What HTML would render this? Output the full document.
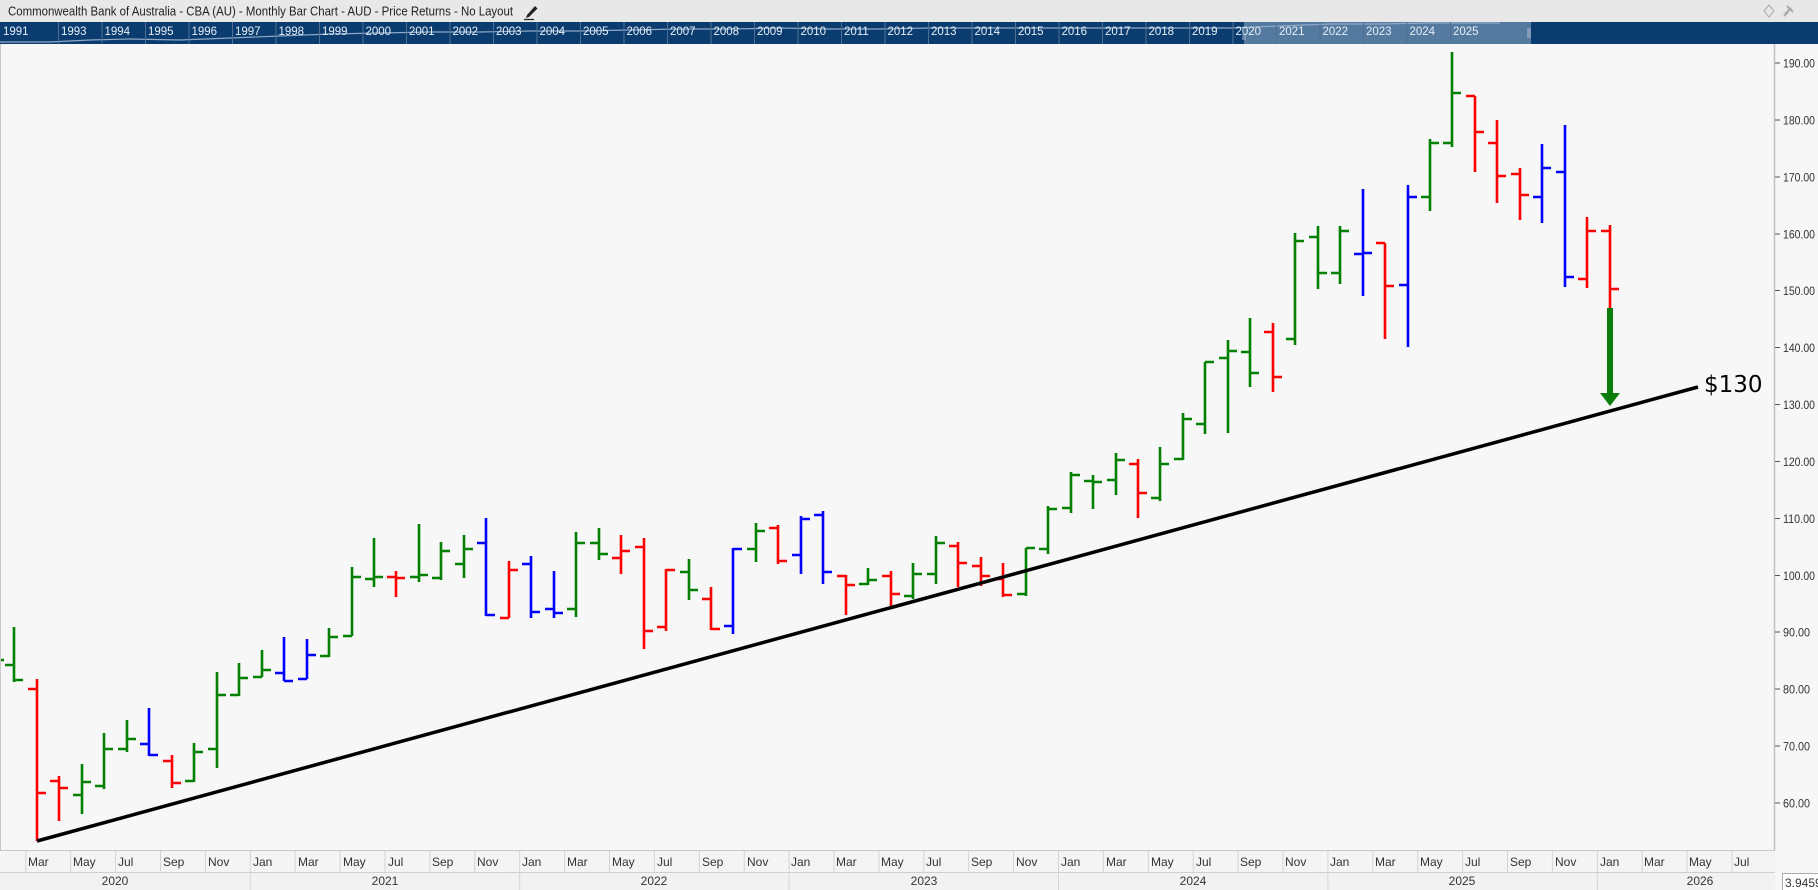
<!DOCTYPE html>
<html><head><meta charset="utf-8"><style>
html,body{margin:0;padding:0;width:1818px;height:890px;overflow:hidden;background:#f7f7f7;font-family:"Liberation Sans",sans-serif}
svg{display:block}
</style></head><body>
<svg width="1818" height="890" viewBox="0 0 1818 890" xmlns="http://www.w3.org/2000/svg" font-family="Liberation Sans, sans-serif">
<rect x="0" y="0" width="1818" height="890" fill="#f7f7f7"/>
<!-- title bar -->
<rect x="0" y="0" width="1818" height="22" fill="#e8e8e8"/>
<text x="8" y="15.5" font-size="12.5" fill="#222" textLength="505" lengthAdjust="spacingAndGlyphs">Commonwealth Bank of Australia - CBA (AU) - Monthly Bar Chart - AUD - Price Returns - No Layout</text>
<path d="M527 15 L535 6 L537.5 8.5 L529 17 L526 18 Z" fill="#222"/>
<line x1="524" y1="19.5" x2="534" y2="19.5" stroke="#222" stroke-width="1.2"/>
<path d="M1769 5 L1774 11 L1769 17 L1764 11 Z" fill="none" stroke="#aaa" stroke-width="1"/>
<path d="M1787 6 L1793 12 M1785 14 L1791 8 M1784 16 L1788 12" stroke="#aaa" stroke-width="2"/>
<!-- navigator -->
<rect x="0" y="22" width="1818" height="22" fill="#0b3c6f"/>
<rect x="1244" y="22" width="287" height="22" fill="#557aa0"/>
<polyline points="0,42 50,42 90,40 130,39 180,40 230,38 280,36 330,34 380,33 430,32 480,32 530,31 580,31 630,30 680,29 730,29 780,28 830,29 880,29 930,28 980,28 1030,28 1080,28 1130,28 1180,28 1230,28 1280,26 1330,24 1380,24 1430,23 1480,23 1500,23" fill="none" stroke="#8fa9c6" stroke-width="1.2"/>
<g fill="#e6eef6" font-size="11.5">
<text x="3" y="35">1991</text>
<g stroke="#4f6f92" stroke-width="1">
<line x1="58.5" y1="22" x2="58.5" y2="44"/><line x1="102" y1="22" x2="102" y2="44"/><line x1="145.5" y1="22" x2="145.5" y2="44"/><line x1="189" y1="22" x2="189" y2="44"/><line x1="232.5" y1="22" x2="232.5" y2="44"/><line x1="276" y1="22" x2="276" y2="44"/><line x1="319.5" y1="22" x2="319.5" y2="44"/><line x1="363" y1="22" x2="363" y2="44"/><line x1="406.5" y1="22" x2="406.5" y2="44"/><line x1="450" y1="22" x2="450" y2="44"/><line x1="493.5" y1="22" x2="493.5" y2="44"/><line x1="537" y1="22" x2="537" y2="44"/><line x1="580.5" y1="22" x2="580.5" y2="44"/><line x1="624" y1="22" x2="624" y2="44"/><line x1="667.5" y1="22" x2="667.5" y2="44"/><line x1="711" y1="22" x2="711" y2="44"/><line x1="754.5" y1="22" x2="754.5" y2="44"/><line x1="798" y1="22" x2="798" y2="44"/><line x1="841.5" y1="22" x2="841.5" y2="44"/><line x1="885" y1="22" x2="885" y2="44"/><line x1="928.5" y1="22" x2="928.5" y2="44"/><line x1="972" y1="22" x2="972" y2="44"/><line x1="1015.5" y1="22" x2="1015.5" y2="44"/><line x1="1059" y1="22" x2="1059" y2="44"/><line x1="1102.5" y1="22" x2="1102.5" y2="44"/><line x1="1146" y1="22" x2="1146" y2="44"/><line x1="1189.5" y1="22" x2="1189.5" y2="44"/><line x1="1233" y1="22" x2="1233" y2="44"/><line x1="1276.5" y1="22" x2="1276.5" y2="44"/><line x1="1320" y1="22" x2="1320" y2="44"/><line x1="1363.5" y1="22" x2="1363.5" y2="44"/><line x1="1407" y1="22" x2="1407" y2="44"/><line x1="1450.5" y1="22" x2="1450.5" y2="44"/>
</g>
<text x="61" y="35">1993</text><text x="104.5" y="35">1994</text><text x="148" y="35">1995</text><text x="191.5" y="35">1996</text><text x="235" y="35">1997</text><text x="278.5" y="35">1998</text><text x="322" y="35">1999</text><text x="365.5" y="35">2000</text><text x="409" y="35">2001</text><text x="452.5" y="35">2002</text><text x="496" y="35">2003</text><text x="539.5" y="35">2004</text><text x="583" y="35">2005</text><text x="626.5" y="35">2006</text><text x="670" y="35">2007</text><text x="713.5" y="35">2008</text><text x="757" y="35">2009</text><text x="800.5" y="35">2010</text><text x="844" y="35">2011</text><text x="887.5" y="35">2012</text><text x="931" y="35">2013</text><text x="974.5" y="35">2014</text><text x="1018" y="35">2015</text><text x="1061.5" y="35">2016</text><text x="1105" y="35">2017</text><text x="1148.5" y="35">2018</text><text x="1192" y="35">2019</text><text x="1235.5" y="35">2020</text><text x="1279" y="35">2021</text><text x="1322.5" y="35">2022</text><text x="1366" y="35">2023</text><text x="1409.5" y="35">2024</text><text x="1453" y="35">2025</text>
</g>
<path d="M1243 34 V40 M1245 34 V40 M1528 28 V38 M1530 28 V38" stroke="#ccd" stroke-width="0.8"/>
<!-- chart borders -->
<line x1="0.5" y1="44" x2="0.5" y2="890" stroke="#c8c8c8"/>
<line x1="1774.5" y1="44" x2="1774.5" y2="850" stroke="#c0c0c0" stroke-width="1.5"/>
<!-- price axis -->
<g fill="#333" font-size="12">
<g stroke="#555" stroke-width="1">
<line x1="1775" y1="63" x2="1780" y2="63"/><line x1="1775" y1="120" x2="1780" y2="120"/><line x1="1775" y1="177" x2="1780" y2="177"/><line x1="1775" y1="234" x2="1780" y2="234"/><line x1="1775" y1="290.5" x2="1780" y2="290.5"/><line x1="1775" y1="347.5" x2="1780" y2="347.5"/><line x1="1775" y1="404.5" x2="1780" y2="404.5"/><line x1="1775" y1="461.5" x2="1780" y2="461.5"/><line x1="1775" y1="518.5" x2="1780" y2="518.5"/><line x1="1775" y1="575.5" x2="1780" y2="575.5"/><line x1="1775" y1="632" x2="1780" y2="632"/><line x1="1775" y1="689" x2="1780" y2="689"/><line x1="1775" y1="746" x2="1780" y2="746"/><line x1="1775" y1="803" x2="1780" y2="803"/>
</g>
<text x="1783" y="67.5" textLength="32" lengthAdjust="spacingAndGlyphs">190.00</text><text x="1783" y="124.5" textLength="32" lengthAdjust="spacingAndGlyphs">180.00</text><text x="1783" y="181.5" textLength="32" lengthAdjust="spacingAndGlyphs">170.00</text><text x="1783" y="238.5" textLength="32" lengthAdjust="spacingAndGlyphs">160.00</text><text x="1783" y="295" textLength="32" lengthAdjust="spacingAndGlyphs">150.00</text><text x="1783" y="352" textLength="32" lengthAdjust="spacingAndGlyphs">140.00</text><text x="1783" y="409" textLength="32" lengthAdjust="spacingAndGlyphs">130.00</text><text x="1783" y="466" textLength="32" lengthAdjust="spacingAndGlyphs">120.00</text><text x="1783" y="523" textLength="32" lengthAdjust="spacingAndGlyphs">110.00</text><text x="1783" y="580" textLength="32" lengthAdjust="spacingAndGlyphs">100.00</text><text x="1783" y="636.5" textLength="27" lengthAdjust="spacingAndGlyphs">90.00</text><text x="1783" y="693.5" textLength="27" lengthAdjust="spacingAndGlyphs">80.00</text><text x="1783" y="750.5" textLength="27" lengthAdjust="spacingAndGlyphs">70.00</text><text x="1783" y="807.5" textLength="27" lengthAdjust="spacingAndGlyphs">60.00</text>
</g>
<!-- bars -->
<g fill="none" stroke-width="2.6">
<path stroke="#008000" d="M1 660H4 M14 627V682M5 665H14M14 680H23 M82 764V814M73 795H82M82 782H91 M104 733V789M95 786H104M104 749H113 M127 720V752M118 749H127M127 739H136 M194 743V782M185 781H194M194 752H203 M217 672V768M208 749H217M217 695H226 M239 663V696M230 695H239M239 678H248 M262 650V677M253 677H262M262 670H271 M329 628V657M320 656H329M329 637H338 M352 567V636M343 636H352M352 577H361 M374 538V587M365 579H374M374 577H383 M419 524V582M410 577H419M419 575H428 M441 542V580M432 578H441M441 551H450 M464 535V578M455 564H464M464 549H473 M576 532V617M567 609H576M576 543H585 M599 528V560M590 543H599M599 554H608 M689 559V600M680 572H689M689 590H698 M756 523V562M747 549H756M756 531H765 M868 568V585M859 584H868M868 580H877 M913 563V599M904 596H913M913 574H922 M936 536V584M927 574H936M936 543H945 M1026 548V596M1017 594H1026M1026 548H1035 M1048 506V554M1039 549H1048M1048 509H1057 M1071 472V513M1062 508H1071M1071 475H1080 M1093 475V509M1084 481H1093M1093 482H1102 M1116 453V495M1107 480H1116M1116 460H1125 M1160 447V501M1151 498H1160M1160 464H1169 M1183 413V460M1174 459H1183M1183 419H1192 M1205 362V434M1196 424H1205M1205 362H1214 M1228 340V433M1219 358H1228M1228 351H1237 M1250 318V387M1241 352H1250M1250 373H1259 M1295 233V345M1286 339H1295M1295 241H1304 M1318 226V289M1309 237H1318M1318 273H1327 M1340 226V284M1331 273H1340M1340 231H1349 M1430 139V211M1421 197H1430M1430 143H1439 M1452 52V147M1443 143H1452M1452 93H1461"/>
<path stroke="#ff0000" d="M37 679V841M28 689H37M37 793H46 M59 776V821M50 781H59M59 788H68 M172 755V788M163 761H172M172 783H181 M396 571V597M387 577H396M396 578H405 M509 561V618M500 618H509M509 570H518 M621 535V574M612 558H621M621 551H630 M644 538V649M635 547H644M644 631H653 M666 569V631M657 627H666M666 570H675 M711 587V630M702 599H711M711 629H720 M778 525V564M769 528H778M778 561H787 M846 575V615M837 576H846M846 585H855 M891 571V606M882 576H891M891 594H900 M958 542V587M949 546H958M958 563H967 M981 557V586M972 566H981M981 576H990 M1003 563V597M994 579H1003M1003 595H1012 M1138 459V518M1129 464H1138M1138 493H1147 M1273 323V392M1264 332H1273M1273 377H1282 M1385 243V339M1376 243H1385M1385 286H1394 M1475 96V172M1466 96H1475M1475 132H1484 M1497 120V203M1488 143H1497M1497 176H1506 M1520 168V220M1511 174H1520M1520 195H1529 M1587 217V288M1578 279H1587M1587 231H1596 M1610 225V308M1601 231H1610M1610 289H1619"/>
<path stroke="#0000ff" d="M149 708V756M140 744H149M149 755H158 M284 637V681M275 673H284M284 681H293 M307 639V679M298 679H307M307 655H316 M486 518V616M477 543H486M486 615H495 M531 556V618M522 564H531M531 612H540 M554 571V618M545 609H554M554 613H563 M733 548V634M724 626H733M733 549H742 M801 516V574M792 555H801M801 519H810 M823 511V584M814 515H823M823 572H832 M1363 189V296M1354 254H1363M1363 253H1372 M1408 185V347M1399 285H1408M1408 197H1417 M1542 144V223M1533 197H1542M1542 168H1551 M1565 125V287M1556 172H1565M1565 277H1574"/>
</g>
<!-- trendline -->
<line x1="37" y1="841" x2="1698" y2="387" stroke="#000" stroke-width="3.5"/>
<text x="1704" y="392" font-size="23" fill="#000" font-family="DejaVu Sans, sans-serif">$130</text>
<!-- arrow -->
<rect x="1607" y="308" width="6" height="86" fill="#0a7d0a"/>
<polygon points="1600,393 1620,393 1610,406" fill="#0a7d0a"/>
<!-- month axis -->
<rect x="0" y="850" width="1775" height="22" fill="#f4f4f4"/>
<rect x="0" y="872" width="1775" height="18" fill="#f2f2f2"/>
<line x1="0" y1="850.5" x2="1775" y2="850.5" stroke="#c8c8c8"/>
<line x1="0" y1="872.5" x2="1775" y2="872.5" stroke="#cfcfcf"/>
<g stroke="#d4d4d4" stroke-width="1">
<line x1="25.8" y1="851" x2="25.8" y2="872"/><line x1="70.7" y1="851" x2="70.7" y2="872"/><line x1="115.6" y1="851" x2="115.6" y2="872"/><line x1="160.5" y1="851" x2="160.5" y2="872"/><line x1="205.4" y1="851" x2="205.4" y2="872"/><line x1="250.3" y1="851" x2="250.3" y2="890"/><line x1="295.2" y1="851" x2="295.2" y2="872"/><line x1="340.1" y1="851" x2="340.1" y2="872"/><line x1="385" y1="851" x2="385" y2="872"/><line x1="429.9" y1="851" x2="429.9" y2="872"/><line x1="474.8" y1="851" x2="474.8" y2="872"/><line x1="519.7" y1="851" x2="519.7" y2="890"/><line x1="564.6" y1="851" x2="564.6" y2="872"/><line x1="609.5" y1="851" x2="609.5" y2="872"/><line x1="654.4" y1="851" x2="654.4" y2="872"/><line x1="699.3" y1="851" x2="699.3" y2="872"/><line x1="744.2" y1="851" x2="744.2" y2="872"/><line x1="789.1" y1="851" x2="789.1" y2="890"/><line x1="834" y1="851" x2="834" y2="872"/><line x1="878.9" y1="851" x2="878.9" y2="872"/><line x1="923.8" y1="851" x2="923.8" y2="872"/><line x1="968.7" y1="851" x2="968.7" y2="872"/><line x1="1013.6" y1="851" x2="1013.6" y2="872"/><line x1="1058.5" y1="851" x2="1058.5" y2="890"/><line x1="1103.4" y1="851" x2="1103.4" y2="872"/><line x1="1148.3" y1="851" x2="1148.3" y2="872"/><line x1="1193.2" y1="851" x2="1193.2" y2="872"/><line x1="1238.1" y1="851" x2="1238.1" y2="872"/><line x1="1283" y1="851" x2="1283" y2="872"/><line x1="1327.9" y1="851" x2="1327.9" y2="890"/><line x1="1372.8" y1="851" x2="1372.8" y2="872"/><line x1="1417.7" y1="851" x2="1417.7" y2="872"/><line x1="1462.6" y1="851" x2="1462.6" y2="872"/><line x1="1507.5" y1="851" x2="1507.5" y2="872"/><line x1="1552.4" y1="851" x2="1552.4" y2="872"/><line x1="1597.3" y1="851" x2="1597.3" y2="890"/><line x1="1642.2" y1="851" x2="1642.2" y2="872"/><line x1="1687.1" y1="851" x2="1687.1" y2="872"/><line x1="1732" y1="851" x2="1732" y2="872"/>
</g>
<g fill="#333" font-size="12">
<text x="28" y="866">Mar</text><text x="73" y="866">May</text><text x="118" y="866">Jul</text><text x="163" y="866">Sep</text><text x="208" y="866">Nov</text><text x="253" y="866">Jan</text><text x="298" y="866">Mar</text><text x="343" y="866">May</text><text x="388" y="866">Jul</text><text x="432" y="866">Sep</text><text x="477" y="866">Nov</text><text x="522" y="866">Jan</text><text x="567" y="866">Mar</text><text x="612" y="866">May</text><text x="657" y="866">Jul</text><text x="747" y="866">Nov</text><text x="702" y="866">Sep</text><text x="791" y="866">Jan</text><text x="836" y="866">Mar</text><text x="881" y="866">May</text><text x="926" y="866">Jul</text><text x="971" y="866">Sep</text><text x="1016" y="866">Nov</text><text x="1061" y="866">Jan</text><text x="1106" y="866">Mar</text><text x="1151" y="866">May</text><text x="1196" y="866">Jul</text><text x="1240" y="866">Sep</text><text x="1285" y="866">Nov</text><text x="1330" y="866">Jan</text><text x="1375" y="866">Mar</text><text x="1420" y="866">May</text><text x="1465" y="866">Jul</text><text x="1510" y="866">Sep</text><text x="1555" y="866">Nov</text><text x="1600" y="866">Jan</text><text x="1644" y="866">Mar</text><text x="1689" y="866">May</text><text x="1734" y="866">Jul</text>
<text x="115" y="885" text-anchor="middle">2020</text><text x="385" y="885" text-anchor="middle">2021</text><text x="654" y="885" text-anchor="middle">2022</text><text x="924" y="885" text-anchor="middle">2023</text><text x="1193" y="885" text-anchor="middle">2024</text><text x="1462" y="885" text-anchor="middle">2025</text><text x="1700" y="885" text-anchor="middle">2026</text>
</g>
<rect x="1782.5" y="873.5" width="40" height="18" fill="#fff" stroke="#aaa"/>
<text x="1785" y="887" font-size="12" fill="#333">3.9459</text>
</svg>
</body></html>
